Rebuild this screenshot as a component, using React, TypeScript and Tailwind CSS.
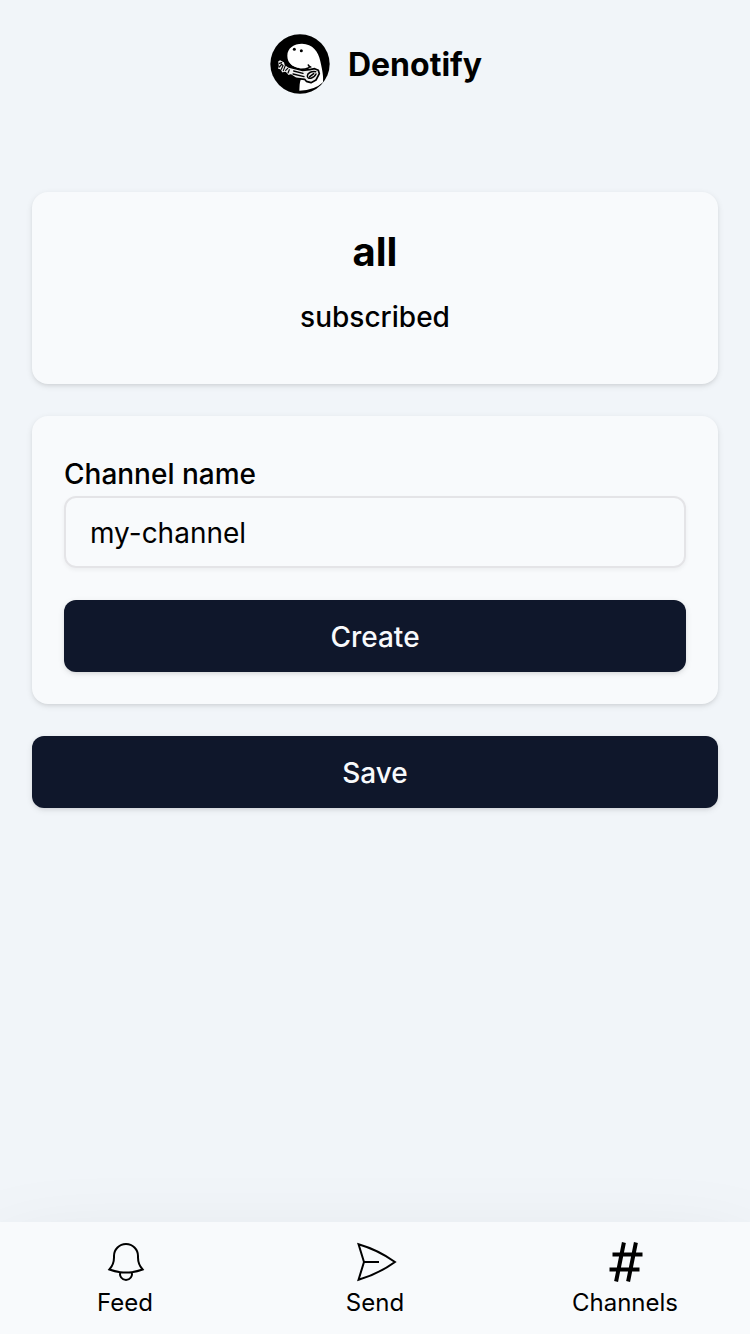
import type { ReactNode } from "react";

function Logo() {
  return (
    <svg className="size-[60px] shrink-0" viewBox="0 0 180 180" aria-hidden="true">
      <circle cx="90" cy="90" r="89" />
      <path d="M52 65C52 42 72 29 96 29C128 30 145 52 151 82C157 108 161 128 159 145Q134 169 88 170C89 156 88 146 93 134L88 102C66 100 52 85 52 65Z" fill="#fff" />
      <path d="M56 88C66 103 92 112 117 101M115 93Q117 98 122 99" fill="none" stroke="#000" strokeWidth="5" strokeLinecap="round" />
      <circle cx="73" cy="46" r="4.5" />
      <circle cx="94" cy="50" r="4.5" />
      <path
        d="M22 81L30 76L44 83L46 91L57 99L68 102L98 109L119 107L134 104L145 109L148 119L138 138L123 146L109 142L104 136L78 133L62 123L55 126L46 116L35 118L31 109L21 105L24 96Z"
        fill="#eee" stroke="#000" strokeWidth="5" strokeLinejoin="round"
      />
      <g fill="none" stroke="#000" strokeWidth="3.5" strokeLinecap="round">
        <path d="M28 88L35 86M28 99L35 91L39 95L34 106M46 94L40 110M53 103L47 109M58 107L54 117" />
        <path d="M71 111L99 118M69 120L102 128" strokeWidth="4" />
        <path d="M137 113C124 111 112 117 112 126C113 138 131 134 138 120M119 128L131 119" strokeWidth="4.5" />
      </g>
    </svg>
  );
}

function Icon({ d, weight = 1 }: { d: string; weight?: number }) {
  return (
    <svg className="ml-0.5 size-12" viewBox="0 0 24 24" fill="none" stroke="currentColor" strokeWidth={weight} aria-hidden="true">
      <path d={d} />
    </svg>
  );
}

const tabs = [
  { label: "Feed", weight: 1, d: "M14.857 17.082a23.848 23.848 0 0 0 5.454-1.31A8.967 8.967 0 0 1 18 9.75V9A6 6 0 0 0 6 9v.75a8.967 8.967 0 0 1-2.312 6.022c1.733.64 3.56 1.085 5.455 1.31m5.714 0a24.255 24.255 0 0 1-5.714 0m5.714 0a3 3 0 1 1-5.714 0" },
  { label: "Send", weight: 1, d: "M6 12 3.269 3.125A59.769 59.769 0 0 1 21.485 12 59.768 59.768 0 0 1 3.27 20.875L5.999 12Zm0 0h7.5" },
  { label: "Channels", weight: 2, d: "M5.25 8.25h15m-16.5 7.5h15m-1.8-13.5-3.9 19.5m-2.1-19.5-3.9 19.5" },
];

function Card({ children }: { children: ReactNode }) {
  return (
    <section className="flex flex-col rounded-2xl bg-slate-50 p-8 shadow-[0_2px_6px_rgba(0,0,0,0.1),0_2px_4px_-2px_rgba(0,0,0,0.1)]">
      {children}
    </section>
  );
}

function Button({ children }: { children: ReactNode }) {
  return (
    <button className="flex h-18 w-full items-center justify-center rounded-xl bg-slate-900 pt-0.5 text-[28px] leading-10 font-medium text-slate-50 shadow-[0_2px_6px_rgba(0,0,0,0.1),0_2px_4px_-2px_rgba(0,0,0,0.1)]">
      {children}
    </button>
  );
}

export default function App() {
  return (
    <div className="flex h-screen flex-col overflow-hidden bg-slate-100 font-['Inter',sans-serif] text-black">
      <header className="flex h-32 items-center justify-center gap-[18px] pl-0.5">
        <Logo />
        <h1 className="pt-0.5 text-[32px] leading-12 font-bold">Denotify</h1>
      </header>
      <main className="flex grow flex-col gap-8 px-8 pt-16">
        <Card>
          <div className="flex h-32 flex-col items-center">
            <h2 className="text-[40px] leading-14 font-bold">all</h2>
            <p className="mt-[17px] text-[28px] leading-10 font-medium">subscribed</p>
          </div>
        </Card>
        <Card>
          <label htmlFor="channel" className="mt-1.5 text-[28px] leading-10 font-medium">Channel name</label>
          <input
            id="channel"
            defaultValue="my-channel"
            className="mt-0.5 mb-8 h-18 rounded-xl border-2 border-[#e4e4e7] bg-transparent px-6 pt-0.5 text-[28px] leading-10 shadow-[0_2px_4px_rgba(0,0,0,0.05)] outline-none"
          />
          <Button>Create</Button>
        </Card>
        <Button>Save</Button>
      </main>
      <nav className="grid h-28 shrink-0 grid-cols-3 bg-slate-50 py-4 shadow-[0_50px_100px_rgba(0,0,0,0.15)]">
        {tabs.map((tab) => (
          <a key={tab.label} className="flex flex-col items-center text-2xl leading-8">
            <Icon d={tab.d} weight={tab.weight} />
            <span className="mt-px">{tab.label}</span>
          </a>
        ))}
      </nav>
    </div>
  );
}
